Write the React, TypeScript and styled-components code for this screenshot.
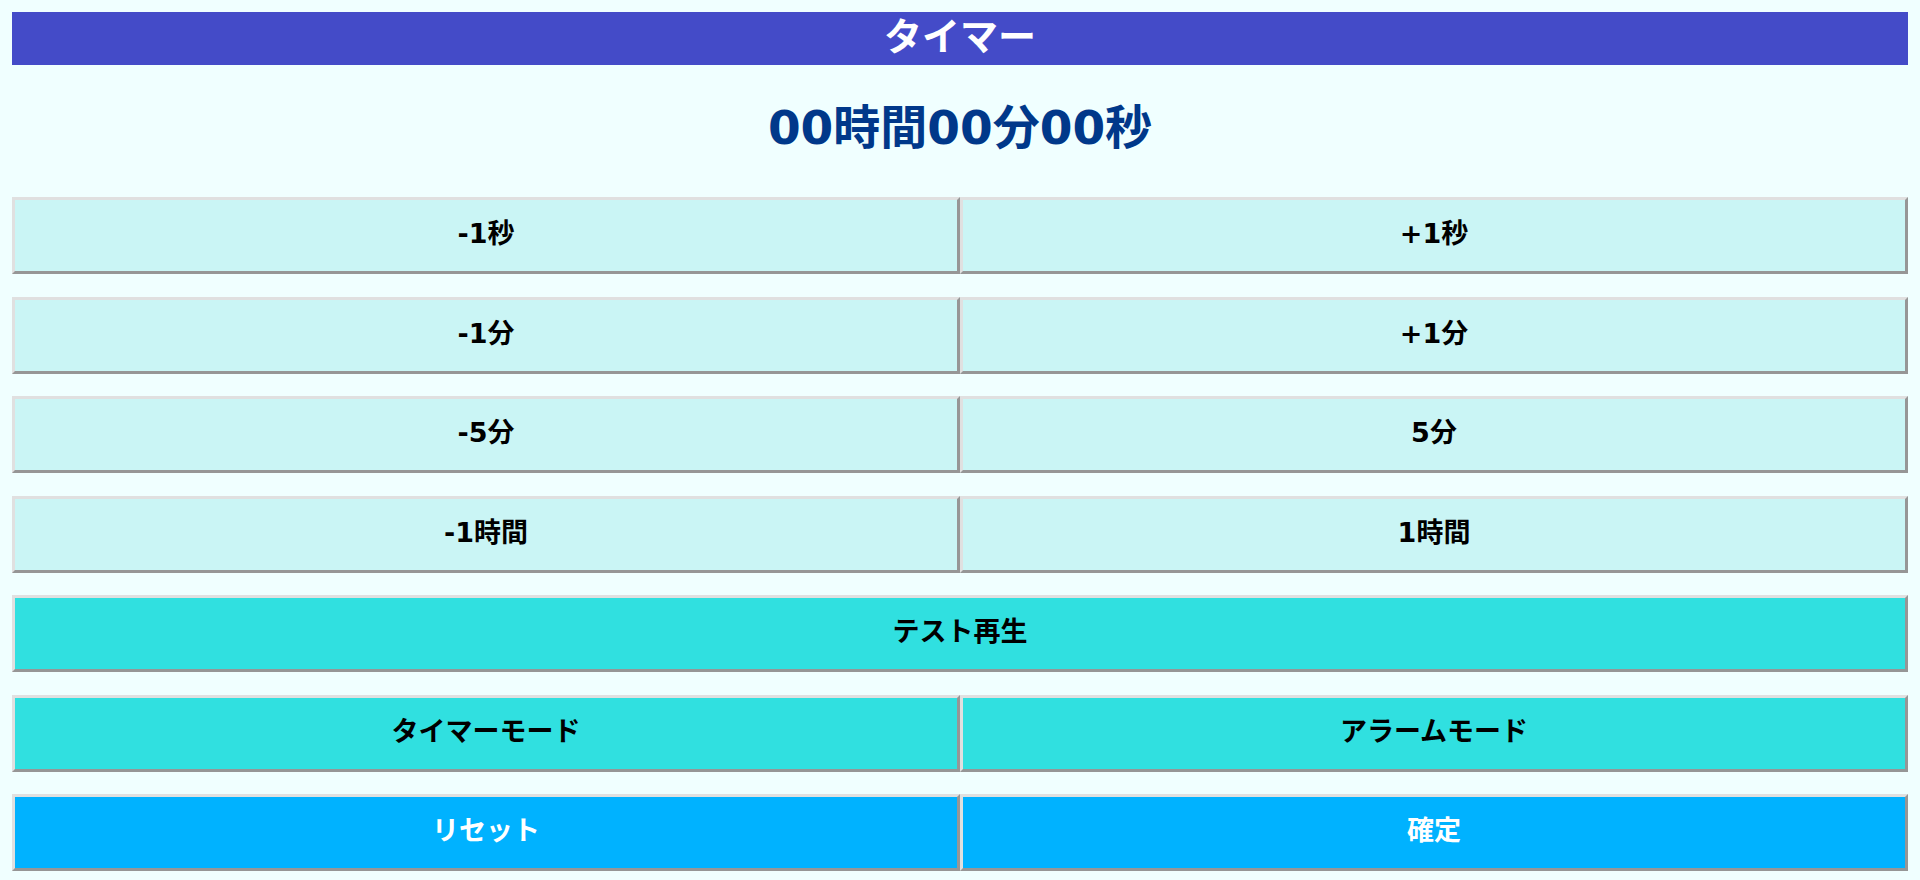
import React from "react";
import styled, { createGlobalStyle } from "styled-components";

const GlobalStyle = createGlobalStyle`
  html, body {
    margin: 0;
    padding: 0;
    background: #f0ffff;
  }
  body {
    font-family: "DejaVu Sans", "Noto Sans CJK JP", sans-serif;
  }
`;

const Page = styled.div`
  padding: 12px;
  display: flex;
  flex-direction: column;
`;

const Header = styled.h1`
  margin: 0;
  height: 53px;
  box-sizing: border-box;
  padding-bottom: 3px;
  background: #444bc8;
  color: #ffffff;
  font-family: "DejaVu Sans", "Noto Sans CJK JP", sans-serif;
  font-weight: bold;
  font-size: 38px;
  line-height: 1;
  display: flex;
  align-items: center;
  justify-content: center;
`;

const Display = styled.div`
  height: 132px;
  box-sizing: border-box;
  padding-bottom: 8px;
  display: flex;
  align-items: center;
  justify-content: center;
  color: #00388a;
  font-family: "DejaVu Sans", "Noto Sans CJK JP", sans-serif;
  font-weight: bold;
  font-size: 47px;
  line-height: 1;
`;

const Rows = styled.div`
  display: flex;
  flex-direction: column;
  gap: 22.5px;
`;

const Row = styled.div<{ $cols: number }>`
  display: grid;
  grid-template-columns: repeat(${(p) => p.$cols}, 1fr);
`;

type Tone = "light" | "mid" | "blue";

const bg: Record<Tone, string> = {
  light: "#caf5f5",
  mid: "#30e0e0",
  blue: "#00b2ff",
};

const Button = styled.button<{ $tone: Tone }>`
  height: 77px;
  margin: 0;
  padding: 0 0 4px;
  box-sizing: border-box;
  border-style: solid;
  border-width: 3px;
  border-color: #e0e0e0 #969696 #969696 #e0e0e0;
  background: ${(p) => bg[p.$tone]};
  color: ${(p) => (p.$tone === "blue" ? "#ffffff" : "#000000")};
  font-family: "DejaVu Sans", "Noto Sans CJK JP", sans-serif;
  font-weight: bold;
  font-size: 27px;
  line-height: 1;
  cursor: pointer;
`;

const rows: { tone: Tone; labels: string[] }[] = [
  { tone: "light", labels: ["-1秒", "+1秒"] },
  { tone: "light", labels: ["-1分", "+1分"] },
  { tone: "light", labels: ["-5分", "5分"] },
  { tone: "light", labels: ["-1時間", "1時間"] },
  { tone: "mid", labels: ["テスト再生"] },
  { tone: "mid", labels: ["タイマーモード", "アラームモード"] },
  { tone: "blue", labels: ["リセット", "確定"] },
];

export default function App() {
  return (
    <>
      <GlobalStyle />
      <Page>
        <Header>タイマー</Header>
        <Display>00時間00分00秒</Display>
        <Rows>
          {rows.map((r, i) => (
            <Row key={i} $cols={r.labels.length}>
              {r.labels.map((l) => (
                <Button key={l} $tone={r.tone}>
                  {l}
                </Button>
              ))}
            </Row>
          ))}
        </Rows>
      </Page>
    </>
  );
}
